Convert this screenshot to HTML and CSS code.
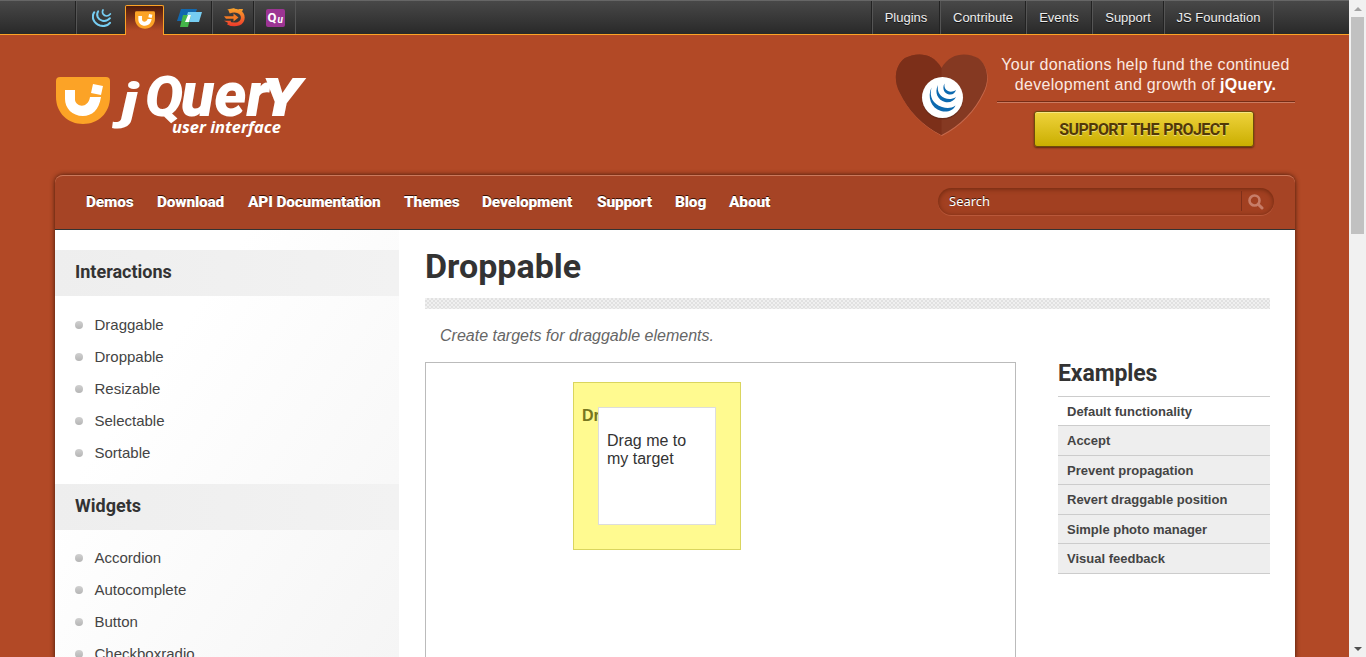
FILE: index.html
```html
<!DOCTYPE html>
<html lang="en">
<head>
<meta charset="utf-8">
<title>Droppable | jQuery UI</title>
<link rel="stylesheet" href="styles.css">
</head>
<body>
<div class="page">
<div class="site">
  <nav class="topbar">
    <ul class="projects">
      <li class="p-jquery"><svg width="20" height="18" viewBox="0 0 20 18" fill="none" stroke="#76cdf2" stroke-linecap="round"><path d="M2.200 3.300C-.8 8 1.500 14.500 8 16.500C12 17.600 16 16.300 18 13.800" stroke-width="2.100"/><path d="M6.200 2.200C3.500 6.500 6.300 10.800 10.500 11.800C14 12.400 16.500 11 18 9.200" stroke-width="1.900"/><path d="M11 1C9.500 4 11.500 6.800 14.500 7C16.200 7 17.500 6 18.300 5" stroke-width="1.700"/></svg></li>
      <li class="p-ui active"><svg width="20" height="18" viewBox="0 0 54 47"><path d="M4 0H50Q54 0 54 4V20C54 36 42 47 27 47S0 36 0 20V4Q0 0 4 0Z" fill="#fca326"/><path d="M9 13H19V23C20 30 31 31 34 21H45C43 34 35 39 27 39C16 39 9 31 9 22ZM38 7L47 9L45 18L36 16Z" fill="#fff"/></svg></li>
      <li class="p-mobile"><svg width="26" height="18" viewBox="0 0 26 18"><path d="M4 0H20L16 12H0Z" fill="#1268ae"/><path d="M11 3H25L22 13H8Z" fill="#76cdf2"/><path d="M6 6H14L11 18H3Z" fill="#44b549"/><path d="M11 6H14L12 13H8Z" fill="#fff"/></svg></li>
      <li class="p-sizzle"><svg width="22" height="20" viewBox="0 0 22 20" fill="none"><defs><linearGradient id="fire" gradientUnits="userSpaceOnUse" x1="0" x2="0" y1="1" y2="18"><stop stop-color="#f9a12b"/><stop offset="1" stop-color="#ee3b2b"/></linearGradient></defs><path d="M5 3.800Q10 1.800 14.500 3.500Q18.800 5.500 18.800 9.500Q18.800 14 14.500 15.800Q9 17.500 4 14.800" stroke="url(#fire)" stroke-width="3.800"/><path d="M3 1.500L11 0L8 3ZM14 1L19 1L18 4ZM0 12.800H7L6 16Z" fill="url(#fire)"/><path d="M0 8.200H9.500V5.500L14.500 9.500L9.500 13.500V10.800H2Z" fill="#f47a24"/></svg></li>
      <li class="p-qunit"><svg width="20" height="18" viewBox="0 0 20 18"><rect x="0" width="19" height="18" rx="2" fill="#9c3493"/><text x="1.500" y="13.300" class="qu-big">Q</text><text x="11.500" y="14" class="qu-small">u</text></svg></li>
    </ul>
    <ul class="links"><li class="l1">Plugins</li><li class="l2">Contribute</li><li class="l3">Events</li><li class="l4">Support</li><li class="l5">JS Foundation</li></ul>
  </nav>

  <header class="header">
    <svg class="logo" width="252" height="66" viewBox="0 0 252 66">
      <path d="M4 2H50Q54 2 54 6V22C54 38 42 49 27 49S0 38 0 22V6Q0 2 4 2Z" fill="#fca326"/>
      <path d="M9 15H19V25C20 32 32 34 34 22H45C43 35 36 41 27 41C16 41 9 33 9 24ZM37 9L47 11L45 20L35 18Z" fill="#fff"/>
      <g class="logo-word">
        <text x="65" y="43" class="logo-j" textLength="17" lengthAdjust="spacingAndGlyphs">j</text>
        <text x="89" y="41" class="logo-q" textLength="38" lengthAdjust="spacingAndGlyphs">Q</text>
        <text x="125" y="41" textLength="88" lengthAdjust="spacingAndGlyphs">uer</text>
        <text x="206" y="41" class="logo-y" textLength="40" lengthAdjust="spacingAndGlyphs">y</text>
      </g>
      <text x="116" y="58" class="logo-sub" textLength="109" lengthAdjust="spacingAndGlyphs">user interface</text>
    </svg>
    <div class="donate">
      <svg class="heart" width="94" height="84" viewBox="0 0 94 84">
        <path d="M46.500 14C56-3 74-1 83 4C93 11 95 27 88 39C80 56 65 72 46.500 81C28 72 13 56 5 39C-2 27 0 11 10 4C20-1 37-3 46.500 14Z" transform="translate(.5 .9)" fill="#c6694c"/>
        <path d="M46.500 14C56-3 74-1 83 4C93 11 95 27 88 39C80 56 65 72 46.500 81C28 72 13 56 5 39C-2 27 0 11 10 4C20-1 37-3 46.500 14Z" fill="#853922"/>
        <path d="M46.500 14V81C28 72 13 56 5 39C-2 27 0 11 10 4C20-1 37-3 46.500 14Z" fill="#7c2f19"/>
        <circle cx="47.500" cy="45" r="20.500" fill="#5f2818" opacity=".7"/>
        <circle cx="47.500" cy="43.500" r="20.500" fill="#fff"/>
        <g fill="#0c69af"><path d="M36.500 33.500C32 43 36 54 46 57C52 58.500 58 57 60.500 51.500C56 54.500 52 54.500 47 53C38 50 34 43 36.500 33.500Z"/><path d="M43 31C39 39 43 46 50 48C55 49 59 47 61 43C57 45.500 53 45.500 49.500 44C44 41.500 42 37 43 31Z"/><path d="M49.500 29.500C46.500 35 50 40 54 40.500C58 41 60 39 61 36C58 38 55 38 53 37C50 35.500 49 33 49.500 29.500Z"/></g>
      </svg>
      <div class="donate-body">
        <p class="donate-text">Your donations help fund the continued<br>development and growth of <b>jQuery.</b></p>
        <a class="support-btn">SUPPORT THE PROJECT</a>
      </div>
    </div>
  </header>

  <main class="container">
    <nav class="menu">
      <ul><li class="m1">Demos</li><li class="m2">Download</li><li class="m3">API Documentation</li><li class="m4">Themes</li><li class="m5">Development</li><li class="m6">Support</li><li class="m7">Blog</li><li class="m8">About</li></ul>
      <div class="search"><span>Search</span><i><svg width="16" height="16" viewBox="0 0 16 16" fill="none" stroke="#c77d68"><circle cx="6.500" cy="6.500" r="5" stroke-width="2.600"/><path d="M10.200 10.200L14 14" stroke-width="3" stroke-linecap="round"/></svg></i></div>
    </nav>
    <div class="columns">
      <aside class="sidebar">
        <h3>Interactions</h3>
        <ul><li>Draggable</li><li>Droppable</li><li>Resizable</li><li>Selectable</li><li>Sortable</li></ul>
        <h3>Widgets</h3>
        <ul class="second"><li>Accordion</li><li>Autocomplete</li><li>Button</li><li>Checkboxradio</li></ul>
      </aside>
      <article class="content">
        <h1>Droppable</h1>
        <hr>
        <p class="desc">Create targets for draggable elements.</p>
        <div class="demo-row">
          <div class="demo">
            <div class="drop"><b>Drop here</b></div>
            <div class="drag">Drag me to my target</div>
          </div>
          <div class="examples">
            <h2>Examples</h2>
            <ul><li class="current">Default functionality</li><li>Accept</li><li>Prevent propagation</li><li>Revert draggable position</li><li>Simple photo manager</li><li>Visual feedback</li></ul>
          </div>
        </div>
      </article>
    </div>
  </main>
</div>
<div class="scrollbar"><span class="up"></span><span class="thumb"></span><span class="down"></span></div>
</div>
</body>
</html>
```
FILE: styles.css
```css
* { box-sizing: border-box; }
body { margin: 0; font-family: "Liberation Sans", Arial, sans-serif; font-size: 15px; color: #333; }
ul { list-style: none; margin: 0; padding: 0; }
p, h1, h2, h3 { margin: 0; }
.page { display: flex; width: 1366px; height: 657px; overflow: hidden; }
.site { flex: 1; background: #b24926; overflow: hidden; }

.topbar { display: flex; justify-content: space-between; height: 35px; padding: 0 75px 0 76px; background: linear-gradient(#484848, #292929); border-top: 1px solid #666; border-bottom: 1px solid #fca326; }
.topbar ul { display: flex; height: 33px; }
.topbar li { display: flex; align-items: center; justify-content: center; border-left: 1px solid #555; box-shadow: -1px 0 #222; }
.projects { border-right: 1px solid #555; }
.p-jquery { width: 49px; padding-left: 2px; }
.projects .active { width: 39px; height: 30px; margin-top: 4px; padding-bottom: 2px; border: 1px solid #fca326; border-bottom: 0; border-radius: 2px 2px 0 0; background: linear-gradient(#4e1c0b, #b24926 85%); box-shadow: 0 1px #b24926; z-index: 1; position: relative; }
.projects .p-mobile { width: 48px; border-left: 0; box-shadow: none; padding-left: 3px; }
.p-sizzle { width: 42px; padding-left: 2px; }
.p-qunit { width: 41px; padding-left: 1px; }
.links { border-right: 1px solid #555; color: #eee; font-size: 13px; text-shadow: 0 1px #111; }
.links li { padding-right: 1px; }
.l1 { width: 68px; } .l2 { width: 86px; } .l3 { width: 66px; } .l4 { width: 72px; } .l5 { width: 109px; }
.qu-big { font: bold 13px Roboto, sans-serif; fill: #fff; }
.qu-small { font: italic bold 10px Roboto, sans-serif; fill: #fff; }

.header { display: flex; justify-content: space-between; height: 140px; padding: 18px 54px 0 56px; }
.logo { margin-top: 22px; overflow: visible; }
.logo-word { font: italic 900 62px Roboto, sans-serif; fill: #fff; }
.logo-j { font-size: 50px; }
.logo-q { font-size: 56px; }
.logo-y { font-size: 66px; font-variant: small-caps; }
.logo-sub { font: italic 700 16px "Open Sans", sans-serif; fill: #fff; }
.donate { display: flex; }
.heart { margin: 1px 8px 0 -1px; }
.donate-body { width: 298px; }
.donate-text { height: 49px; padding-top: 2px; padding-right: 1px; text-align: center; font-size: 16px; line-height: 20px; letter-spacing: .3px; color: #fbe9e2; border-bottom: 1px solid #762c15; box-shadow: 0 1px #cb7b60; }
.donate-text b { color: #fff; }
.support-btn { display: block; width: 220px; height: 36px; margin: 9px 0 0 37px; border: 1px solid #6d4c0b; border-radius: 3px; background: linear-gradient(#efd33c, #caae00); box-shadow: inset 0 1px #f6e683, 0 1px 2px #5b260f; color: #513808; font: bold 16px/35px Roboto, sans-serif; letter-spacing: -.6px; word-spacing: 1px; text-align: center; text-shadow: 0 1px #eadb79; white-space: nowrap; }

.container { width: 1240px; margin-left: 55px; box-shadow: 0 0 5px #3f1608; border-radius: 8px 8px 0 0; }
.menu { display: flex; align-items: center; justify-content: space-between; height: 55px; padding: 0 21px 2px 31px; background: #a64425; border-top: 1px solid #cb785b; border-bottom: 1px solid #333; border-radius: 8px 8px 0 0; }
.menu ul { display: flex; color: #fff; font: 900 15.500px Roboto, sans-serif; letter-spacing: -.2px; text-shadow: 0 -1px #3a1105; white-space: nowrap; }
.m1 { width: 71px; } .m2 { width: 91px; } .m3 { width: 156px; } .m4 { width: 78px; } .m5 { width: 115px; } .m6 { width: 78px; } .m7 { width: 54px; } .m8 { width: 50px; }
.search { display: flex; align-items: center; justify-content: space-between; width: 336px; height: 27px; padding: 0 10px 1px 11px; border-radius: 14px; background: #a24021; box-shadow: inset 0 1px 5px #6b270f, 0 1px #b9583a; color: #fff; font: 13px "Noto Sans", sans-serif; text-shadow: 0 -1px #40180b; }
.search i { display: flex; padding: 3px 0 1px 6px; border-left: 1px solid #7e301a; }

.columns { display: flex; height: 430px; background: #fff; }
.sidebar { width: 344px; padding-top: 20px; background: linear-gradient(125deg, #fff 30%, #f5f5f5); }
.sidebar h3 { height: 46px; padding-left: 20px; background: linear-gradient(90deg, #eee, #f2f2f2); font: bold 18px/43px Roboto, sans-serif; }
.sidebar ul { padding: 12px 0 16px 20px; }
.sidebar .second { padding-top: 11px; }
.sidebar li { display: flex; align-items: center; height: 32px; color: #444; }
.sidebar li::before { content: ""; width: 8px; height: 8px; margin: 2px 12px 0 -.5px; border-radius: 50%; background: linear-gradient(#d0d0d0, #b5b5b5); }
.content { width: 845px; margin-left: 26px; }
h1 { height: 68px; font: bold 34px/73px Roboto, sans-serif; }
hr { height: 11px; margin: 0; border: 0; background: repeating-conic-gradient(#e1e1e1 0 25%, #f0f0f0 0 50%) 0 0 / 4px 4px; }
.desc { height: 53px; padding-left: 15px; font-size: 16px; font-style: italic; line-height: 53px; color: #666; }
.demo-row { display: flex; justify-content: space-between; }
.demo { position: relative; width: 591px; height: 500px; border: 1px solid #bbb; }
.drop { position: absolute; left: 147px; top: 19px; width: 168px; height: 168px; padding: 24px 8px; border: 1px solid #dad55e; background: #fffa90; color: #777620; font-size: 16px; line-height: 18px; }
.drag { position: absolute; left: 172px; top: 44px; width: 118px; height: 118px; padding: 24px 8px; border: 1px solid #ddd; background: #fff; font-size: 16px; line-height: 18px; }
.examples { width: 212px; }
h2 { height: 34px; font: bold 23px/23px Roboto, sans-serif; letter-spacing: -.1px; }
.examples ul { border-top: 1px solid #ccc; }
.examples li { height: 29.450px; padding-left: 9px; border-bottom: 1px solid #ccc; background: #eee; font-size: 13px; font-weight: bold; line-height: 29px; color: #444; }
.examples .current { background: #fff; }

.scrollbar { display: flex; flex-direction: column; align-items: center; width: 17px; height: 657px; background: #f1f1f1; }
.up { margin: 7px 0 6px; border: 4px solid transparent; border-top: 0; border-bottom-color: #a3a3a3; }
.thumb { width: 13px; height: 217px; background: #c1c1c1; }
.down { margin-top: auto; margin-bottom: 6px; border: 4px solid transparent; border-bottom: 0; border-top-color: #505050; }
```
